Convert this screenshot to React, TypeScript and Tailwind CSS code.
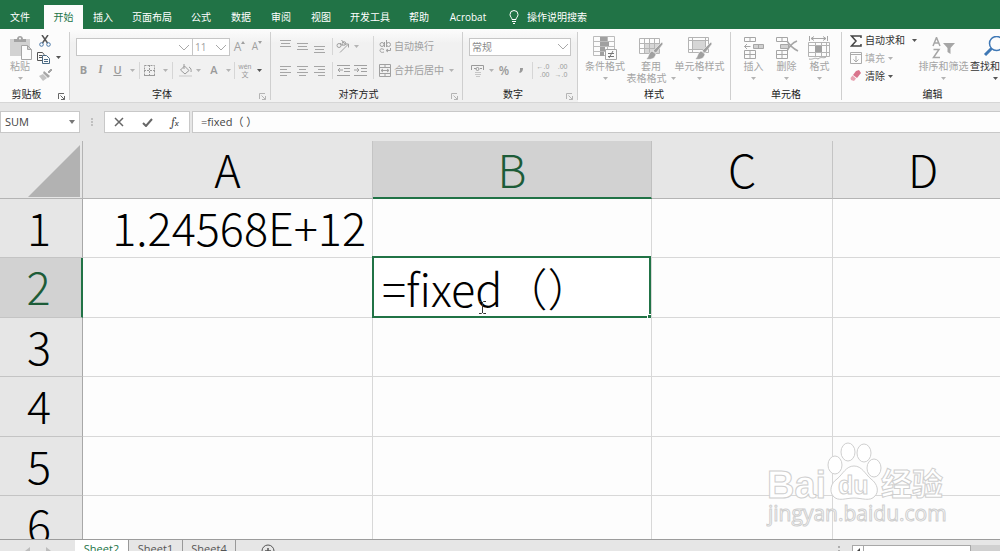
import { useState } from 'react'
import type { ReactNode } from 'react'
import { clsx } from 'clsx'

const TABS = ['文件', '开始', '插入', '页面布局', '公式', '数据', '审阅', '视图', '开发工具', '帮助', 'Acrobat']

const COLUMNS = ['A', 'B', 'C', 'D']

const ROWS = [
  { id: 1, height: 'h-[59px]' },
  { id: 2, height: 'h-[60px]' },
  { id: 3, height: 'h-[59px]' },
  { id: 4, height: 'h-[60px]' },
  { id: 5, height: 'h-[59px]' },
  { id: 6, height: 'h-[60px]' },
]

type IconProps = { w: number; h: number; className?: string; children: ReactNode }

function Icon({ w, h, className, children }: IconProps) {
  return (
    <svg
      width={w}
      height={h}
      viewBox={`0 0 ${w} ${h}`}
      fill="none"
      stroke="currentColor"
      className={clsx('shrink-0', className)}
      aria-hidden="true"
    >
      {children}
    </svg>
  )
}

function Caret({ dark = false }: { dark?: boolean }) {
  return (
    <Icon w={5} h={3} className={dark ? 'text-[#555555]' : 'text-[#b4b4b4]'}>
      <path d="M0 0h5L2.5 3z" fill="currentColor" stroke="none" />
    </Icon>
  )
}

function Chevron() {
  return (
    <Icon w={12} h={7} className="text-[#a8a8a8]">
      <path d="M1 1l5 5 5-5" />
    </Icon>
  )
}

type ToolProps = { label: string; className?: string; children: ReactNode }

function Tool({ label, className = 'w-[17px]', children }: ToolProps) {
  return (
    <button
      type="button"
      aria-label={label}
      className={clsx('flex h-[17px] shrink-0 items-center justify-center', className)}
    >
      {children}
    </button>
  )
}

function Rule() {
  return <span className="h-[17px] w-px shrink-0 bg-[#d6d6d6]" />
}

function Launcher({ label, dark = false }: { label: string; dark?: boolean }) {
  return (
    <button
      type="button"
      aria-label={label}
      className={clsx('absolute right-1 bottom-0', dark ? 'text-[#666666]' : 'text-[#b4b4b4]')}
    >
      <Icon w={7} h={7}>
        <path d="M.5 6V.5H6M2.5 2.5l4 4M6.5 3v3.5H3" />
      </Icon>
    </button>
  )
}

type GroupProps = {
  label: string
  className: string
  launcher?: boolean
  darkLauncher?: boolean
  shaded?: boolean
  children: ReactNode
}

function Group({ label, className, launcher, darkLauncher, shaded, children }: GroupProps) {
  return (
    <section
      aria-label={label}
      className={clsx(
        'shrink-0 pt-[3px] pb-[2px]',
        shaded && 'bg-linear-to-b from-[#fcfcfc] to-[#f1f1f1] to-20%',
        className
      )}
    >
      <div className="relative flex h-full flex-col border-r border-[#cfcfcf]">
        <div className="flex-1">{children}</div>
        <h2 className="text-center text-[10px] leading-[12px] text-[#222222]">{label}</h2>
        {launcher && <Launcher label={`${label}设置`} dark={darkLauncher} />}
      </div>
    </section>
  )
}

type BigToolProps = { icon: ReactNode; lines: string[]; className: string; dark?: boolean }

function BigTool({ icon, lines, className, dark = false }: BigToolProps) {
  return (
    <button
      type="button"
      className={clsx(
        'flex shrink-0 flex-col items-center pt-[3px] text-[10px] leading-[12px] whitespace-nowrap',
        dark ? 'text-[#333333]' : 'text-[#a4a4a4]',
        className
      )}
    >
      <span className="flex h-[25px] items-center text-[#a6a6a6]">{icon}</span>
      <span>{lines[0]}</span>
      {lines[1] ? (
        <span className="flex items-center gap-1">
          {lines[1]}
          <Caret />
        </span>
      ) : (
        <span className="flex h-[12px] items-center">
          <Caret dark={dark} />
        </span>
      )}
    </button>
  )
}

function AlignIcon({ rows }: { rows: number[][] }) {
  return (
    <Icon w={11} h={13} className="text-[#a6a6a6]">
      {rows.map(([y, x, width]) => (
        <path key={y} d={`M${x} ${y + 0.5}h${width}`} />
      ))}
    </Icon>
  )
}

function tabWidth(tab: string) {
  if (tab === '文件') return 'w-11 pr-1'
  if (tab === '开始') return 'w-[39px]'
  return tab.length > 2 ? 'w-[58px]' : 'w-10'
}

function TabStrip() {
  const [active, setActive] = useState('开始')
  return (
    <nav className="flex h-[29px] shrink-0 items-end overflow-hidden bg-[#217346] text-[10px] text-white">
      {TABS.map((tab) => (
        <button
          key={tab}
          type="button"
          onClick={() => setActive(tab)}
          className={clsx(
            'h-6 shrink-0 whitespace-nowrap',
            tabWidth(tab),
            tab === active && 'bg-[#fcfcfc] text-[#217346]'
          )}
        >
          {tab}
        </button>
      ))}
      <label className="ml-3 flex h-6 items-center gap-2">
        <Icon w={10} h={14}>
          <path d="M3 9.5C3 7.5 1 7 1 4.5a4 4 0 018 0C9 7 7 7.5 7 9.5zM3 11.5h4M4 13.5h2" />
        </Icon>
        <input
          type="text"
          placeholder="操作说明搜索"
          className="w-40 bg-transparent text-[10px] outline-none placeholder:text-white"
        />
      </label>
    </nav>
  )
}

function ClipboardGroup() {
  return (
    <Group label="剪贴板" className="w-[70px] [&_h2]:pr-4" launcher darkLauncher>
      <div className="flex pl-[3px]">
        <BigTool
          className="w-[34px]"
          lines={['粘贴']}
          icon={
            <Icon w={23} h={25}>
              <path d="M1 4h20v17H1z" fill="#d2d2d2" stroke="none" />
              <path d="M5 7V4h3c0-4 6-4 6 0h3v3z" fill="#a3a3a3" stroke="none" />
              <circle cx="11" cy="3.5" r="1" fill="#fcfcfc" stroke="none" />
              <path d="M12.5 10.5h6l4 4v10h-10zM18.5 10.5v4h4" fill="#fcfcfc" />
            </Icon>
          }
        />
        <div className="flex flex-col">
          <Tool label="剪切" className="w-4 text-[#555555]">
            <Icon w={12} h={12}>
              <path d="M3 0l5.5 8M9 0L3.5 8" strokeWidth="1.5" />
              <circle cx="2.5" cy="9.5" r="1.8" stroke="#4a78a8" />
              <circle cx="9.5" cy="9.5" r="1.8" stroke="#4a78a8" />
            </Icon>
          </Tool>
          <Tool label="复制" className="w-6 gap-1.5 text-[#555555]">
            <Icon w={13} h={12}>
              <path d="M.5.5h5l1.5 2v6H.5zM2 3.5h3M2 5.5h3" fill="#fcfcfc" />
              <path d="M5.5 3.5h4l3 3v5h-7zM7 7.5h4M7 9.5h4" fill="#fcfcfc" stroke="#4a6a84" />
            </Icon>
            <Caret dark />
          </Tool>
          <Tool label="格式刷" className="w-4 text-[#a6a6a6]">
            <Icon w={13} h={12}>
              <path d="M9 3l3-3 1 1-3 3z" fill="currentColor" />
              <path d="M5 2l6 5-2 2-5-5z" fill="currentColor" stroke="none" />
              <path d="M4 5l4 4-4 3-4-5z" fill="#c4c4c4" stroke="none" />
            </Icon>
          </Tool>
        </div>
      </div>
    </Group>
  )
}

function FontGroup() {
  return (
    <Group label="字体" className="w-[201px] [&_h2]:pr-4" launcher shaded>
      <div className="flex pt-[6px] pl-[6px] text-[#a0a0a0]">
        <div className="flex h-[18px] w-[117px] items-center border border-[#c6c6c6] bg-white pr-0.5">
          <input type="text" aria-label="字体名称" className="w-full min-w-0 bg-transparent text-[10px] outline-none" />
          <Chevron />
        </div>
        <div className="flex h-[18px] w-[37px] items-center border border-l-0 border-[#c6c6c6] bg-white pr-0.5">
          <input
            type="text"
            aria-label="字号"
            defaultValue="11"
            className="w-full min-w-0 bg-transparent pl-0.5 text-[10px] outline-none"
          />
          <Chevron />
        </div>
        <Tool label="增大字号" className="w-[19px] text-[12px]">
          A
          <Icon w={4} h={11}>
            <path d="M0 3l2-3 2 3z" fill="currentColor" stroke="none" />
          </Icon>
        </Tool>
        <Tool label="减小字号" className="w-[16px] text-[10px]">
          A
          <Icon w={4} h={11}>
            <path d="M0 0l2 3 2-3z" fill="currentColor" stroke="none" />
          </Icon>
        </Tool>
      </div>
      <div className="flex pt-[6px] pl-[5px] text-[11px] text-[#9a9a9a]">
        <Tool label="加粗" className="w-[17px] font-bold">
          B
        </Tool>
        <Tool label="倾斜" className="w-[17px] font-serif font-bold italic">
          I
        </Tool>
        <Tool label="下划线" className="w-[30px] gap-2 font-semibold">
          <span className="underline">U</span>
          <Caret />
        </Tool>
        <Rule />
        <Tool label="边框" className="w-[32px] gap-2">
          <Icon w={11} h={11}>
            <path d="M.5.5h10v10H.5zM5.5 0v11M0 5.5h11" strokeDasharray="2 1" />
            <path d="M0 10.5h11" />
          </Icon>
          <Caret />
        </Tool>
        <Rule />
        <Tool label="填充颜色" className="w-[34px] gap-1">
          <Icon w={13} h={13}>
            <path d="M1.5 6l4-4 4.5 4.5L6 10zM5 0v5M10 3c2 1 2.5 3 2 5" />
            <path d="M0 12h13" stroke="#dddddd" strokeWidth="2" />
          </Icon>
          <Caret />
        </Tool>
        <Tool label="字体颜色" className="w-[27px] gap-2 font-semibold">
          A
          <Caret />
        </Tool>
        <Rule />
        <Tool label="拼音指南" className="w-[31px] gap-1.5">
          <span className="flex flex-col items-center font-['Liberation_Sans','Noto_Sans_CJK_SC',sans-serif] text-[7px] leading-[8px]">
            <span>wén</span>
            <span>文</span>
          </span>
          <Caret dark />
        </Tool>
      </div>
    </Group>
  )
}

function AlignmentGroup() {
  return (
    <Group label="对齐方式" className="w-[192px] [&_h2]:pr-4" launcher shaded>
      <div className="flex pl-[6px] text-[10px] whitespace-nowrap text-[#a0a0a0]">
        <div className="flex w-[55px] flex-col gap-[7px] pt-[6px]">
          <div className="flex">
            <Tool label="顶端对齐">
              <AlignIcon rows={[[0, 0, 11], [3, 1, 9], [6, 0, 11]]} />
            </Tool>
            <Tool label="垂直居中">
              <AlignIcon rows={[[3, 0, 11], [6, 1, 9], [9, 0, 11]]} />
            </Tool>
            <Tool label="底端对齐">
              <AlignIcon rows={[[6, 0, 11], [9, 1, 9], [12, 0, 11]]} />
            </Tool>
          </div>
          <div className="flex">
            <Tool label="左对齐">
              <AlignIcon rows={[[2, 0, 11], [5, 0, 7], [8, 0, 11], [11, 0, 7]]} />
            </Tool>
            <Tool label="居中">
              <AlignIcon rows={[[2, 0, 11], [5, 2, 7], [8, 0, 11], [11, 2, 7]]} />
            </Tool>
            <Tool label="右对齐">
              <AlignIcon rows={[[2, 0, 11], [5, 4, 7], [8, 0, 11], [11, 4, 7]]} />
            </Tool>
          </div>
        </div>
        <div className="flex w-[41px] flex-col gap-[7px] pt-[6px]">
          <div className="flex">
            <Rule />
            <Tool label="方向" className="w-[28px] gap-1">
              <Icon w={14} h={13}>
                <circle cx="3" cy="5.5" r="2" />
                <path d="M4 3l2.5 3M5.5 0l4 5" />
                <circle cx="8" cy="3.5" r="1.8" />
                <path d="M4 12.5l8-8M9 4h3.5v3.5" />
              </Icon>
              <Caret />
            </Tool>
          </div>
          <div className="flex">
            <Rule />
            <Tool label="减少缩进量" className="w-[21px]">
              <Icon w={13} h={11}>
                <path d="M0 .5h13M7 3.5h6M7 6.5h6M0 10.5h13M1 5h5M3 3L1 5l2 2" />
              </Icon>
            </Tool>
            <Tool label="增加缩进量" className="w-[13px]">
              <Icon w={13} h={11}>
                <path d="M0 .5h13M7 3.5h6M7 6.5h6M0 10.5h13M0 5h5M3 3l2 2-2 2" />
              </Icon>
            </Tool>
          </div>
        </div>
        <div className="mt-1 flex flex-col gap-[7px] border-l border-[#d6d6d6] pt-[2px] pl-[5px]">
          <button type="button" className="flex h-[17px] items-center gap-[3px]">
            <Icon w={12} h={14}>
              <circle cx="3" cy="4.5" r="2" />
              <path d="M5.5 2v5M7.5 0v7M5 9.5C2 8 1 9 1 10.5S3 13 5 12M11.5 8v2.5h-4M9 9l-2 1.5L9 12" />
              <circle cx="9.5" cy="4.5" r="2" />
            </Icon>
            自动换行
          </button>
          <button type="button" className="flex h-[17px] items-center gap-[3px]">
            <Icon w={12} h={13}>
              <path d="M.5.5h11v12H.5zM0 3.5h12M0 9.5h12M6 0v3.5M6 9.5V13M2 6.5h8M4 5L2 6.5 4 8M8 5l2 1.5L8 8" />
            </Icon>
            合并后居中
            <span className="ml-0.5">
              <Caret />
            </span>
          </button>
        </div>
      </div>
    </Group>
  )
}

function NumberGroup() {
  return (
    <Group label="数字" className="w-[115px] [&_h2]:pr-[14px]" launcher shaded>
      <div className="px-[6px] pt-[6px]">
        <div className="relative">
          <select
            aria-label="数字格式"
            defaultValue="常规"
            className="block h-[18px] w-full appearance-none border border-[#c6c6c6] bg-white pl-0.5 text-[10px] text-[#8c8c8c]"
          >
            <option>常规</option>
            <option>数值</option>
          </select>
          <span className="pointer-events-none absolute top-[5px] right-0.5">
            <Chevron />
          </span>
        </div>
      </div>
      <div className="flex pt-[6px] pl-[7px] text-[#9a9a9a]">
        <Tool label="会计数字格式" className="w-6 gap-1">
          <Icon w={14} h={12}>
            <path d="M.5 5V.5h12V5M3 3.5h2M9 3.5h2" />
            <circle cx="6.5" cy="4" r="1.5" />
            <path d="M4 7.5h6M4 9.5h6M5 11.5h4" stroke="#c6c6c6" />
          </Icon>
          <Caret />
        </Tool>
        <Tool label="百分比样式" className="w-[20px] text-[12px] font-semibold">
          %
        </Tool>
        <Tool label="千位分隔样式" className="w-[18px] pr-1">
          <Icon w={4} h={5}>
            <path d="M1 0h3c0 3-1 4-3 5l-1-1c1-1 1-1 1-2z" fill="currentColor" stroke="none" />
          </Icon>
        </Tool>
        <Rule />
        <Tool label="增加小数位数" className="w-[20px]">
          <span className="flex flex-col items-end font-['Liberation_Sans',sans-serif] text-[7px] leading-[8px]">
            <span>←.0</span>
            <span>.00</span>
          </span>
        </Tool>
        <Tool label="减少小数位数" className="w-[16px]">
          <span className="flex flex-col items-end font-['Liberation_Sans',sans-serif] text-[7px] leading-[8px]">
            <span>.00</span>
            <span>→.0</span>
          </span>
        </Tool>
      </div>
    </Group>
  )
}

function BrushMark() {
  return (
    <>
      <path d="M23 6l1 2-7 9-3-2z" fill="#a0a0a0" stroke="#fcfcfc" strokeWidth=".5" />
      <path d="M13 15l4 3c-1 5-6 6-10 5 3-1 2-6 6-8z" fill="#a0a0a0" stroke="#fcfcfc" strokeWidth=".5" />
    </>
  )
}

function StylesGroup() {
  return (
    <Group label="样式" className="w-[153px]">
      <div className="flex pl-[3px]">
        <BigTool
          className="w-[48px]"
          lines={['条件格式']}
          icon={
            <Icon w={24} h={24}>
              <path d="M.5.5h21v19H.5zM.5 5.5h21M.5 10.5h21M.5 15.5h21M7.5.5v19M14.5.5v19" stroke="#bcbcbc" />
              <path d="M7 1h7v4H7zM7 6h9v4H7zM7 11h5v4H7zM7 16h4v4H7z" fill="#a0a0a0" stroke="none" />
              <path d="M12.5 13.5h11v10h-11z" fill="#fcfcfc" />
              <path d="M15 17.5h6M15 20.5h6M20 15l-4 7" stroke="#777777" />
            </Icon>
          }
        />
        <BigTool
          className="w-[44px]"
          lines={['套用', '表格格式']}
          icon={
            <Icon w={24} h={24}>
              <path d="M6 7h15v10H6z" fill="#d6d6d6" stroke="none" />
              <path d="M.5 2.5h20v15H.5zM.5 7.5h20M.5 12.5h20M5.5 2.5v15M10.5 2.5v15M15.5 2.5v15" stroke="#b4b4b4" />
              <BrushMark />
            </Icon>
          }
        />
        <BigTool
          className="w-[53px]"
          lines={['单元格样式']}
          icon={
            <Icon w={24} h={24}>
              <path d="M4 5h13v8H4z" fill="#d6d6d6" stroke="none" />
              <path d="M.5 1.5h20v15H.5zM.5 4.5h20M.5 13.5h20M4.5 1.5v15M17.5 1.5v15" stroke="#b4b4b4" />
              <BrushMark />
            </Icon>
          }
        />
      </div>
    </Group>
  )
}

function CellsGroup() {
  return (
    <Group label="单元格" className="w-[111px]">
      <div className="flex pl-[6px]">
        <BigTool
          className="w-[33px]"
          lines={['插入']}
          icon={
            <Icon w={22} h={24}>
              <path d="M1.5 1.5h11v4h-11zM7 1.5v4M1.5 14.5h11v8h-11zM1.5 18.5h11M7 14.5v8" />
              <path d="M10.5 8.5h10v4h-10zM15.5 8.5v4" fill="#d0d0d0" />
              <path d="M1.5 10.5h6M4 8l-2.5 2.5L4 13" />
            </Icon>
          }
        />
        <BigTool
          className="w-[33px]"
          lines={['删除']}
          icon={
            <Icon w={24} h={24}>
              <path d="M1.5 1.5h11v4h-11zM7 1.5v4M1.5 14.5h11v8h-11zM1.5 18.5h11M7 14.5v8" />
              <path d="M5.5 8.5h8v4h-8z" fill="#d0d0d0" />
              <path d="M12 5c3 5 7 8 11 10M22 5c-5 2-8 6-10 10" strokeWidth="1.5" />
            </Icon>
          }
        />
        <BigTool
          className="w-[33px]"
          lines={['格式']}
          icon={
            <Icon w={23} h={24}>
              <path d="M1.5 0v5M19.5 0v5M3 2.5h15M6 .5l-3 2 3 2M15 .5l3 2-3 2" />
              <path d="M.5 6.5h21v14H.5zM.5 9.5h21M.5 16.5h21M7.5 6.5v14M13.5 6.5v14M18.5 6.5v14" stroke="#b4b4b4" />
              <path d="M7 10h7v6H7z" fill="#a0a0a0" stroke="none" />
              <path d="M1 23c4 1 5-2 9 0 4-3 5 0 8-2" />
            </Icon>
          }
        />
      </div>
    </Group>
  )
}

function EditingGroup() {
  return (
    <Group label="编辑" className="w-[182px]">
      <div className="flex pl-2">
        <div className="flex w-[68px] flex-col text-[10px] whitespace-nowrap text-[#333333]">
          <button type="button" className="flex h-[17px] items-center gap-[3px]">
            <Icon w={12} h={12} className="text-[#444444]">
              <path d="M11 3V1H1.5L6 6l-4.5 5H11V9" strokeWidth="1.5" />
            </Icon>
            自动求和
            <span className="ml-1">
              <Caret dark />
            </span>
          </button>
          <button type="button" className="flex h-[18px] items-center gap-[3px] text-[#ababab]">
            <Icon w={12} h={12}>
              <path d="M.5.5h11v11H.5zM0 2.5h12M6 4v6M3.5 7.5L6 10l2.5-2.5" />
            </Icon>
            填充
            <Caret />
          </button>
          <button type="button" className="flex h-[18px] items-center gap-[3px]">
            <Icon w={12} h={12}>
              <path d="M6 1l3-1 2 3-4 5-4-3z" fill="#d9748c" stroke="none" />
              <path d="M2.5 5.5L6 8.5 4 11l-3-1-.5-2z" fill="#e7a3b2" stroke="none" />
            </Icon>
            清除
            <Caret dark />
          </button>
        </div>
        <BigTool
          className="w-[51px]"
          lines={['排序和筛选']}
          icon={
            <Icon w={24} h={22}>
              <path d="M1 9L4.5.5 8 9M2.5 6h4M1.5 12.5H7l-5.5 8H8" strokeWidth="1.5" />
              <path d="M11 6h12l-4.5 5v6l-3-2v-4z" fill="currentColor" stroke="none" />
            </Icon>
          }
        />
        <BigTool
          dark
          className="w-[52px]"
          lines={['查找和选择']}
          icon={
            <Icon w={24} h={24} className="text-[#3f78b5]">
              <circle cx="13.5" cy="7.5" r="7" strokeWidth="1.5" />
              <path d="M8.5 12.5L2 19" strokeWidth="3" />
            </Icon>
          }
        />
      </div>
    </Group>
  )
}

function FormulaBar() {
  return (
    <div className="flex h-[22px] shrink-0 text-[11px] text-[#444444]">
      <div className="flex w-[80px] items-center border border-[#c8c8c8] bg-white pr-1">
        <input
          type="text"
          aria-label="名称框"
          defaultValue="SUM"
          className="w-full min-w-0 bg-transparent pl-1 text-[11px] outline-none"
        />
        <Icon w={6} h={4} className="text-[#777777]">
          <path d="M0 0h6L3 4z" fill="currentColor" stroke="none" />
        </Icon>
      </div>
      <div className="flex w-6 items-center justify-center text-[#999999]">
        <Icon w={2} h={10}>
          <path d="M1 1v2M1 4v2M1 7v2" />
        </Icon>
      </div>
      <div className="flex w-[86px] items-center justify-around border border-[#c8c8c8] bg-white">
        <Tool label="取消">
          <Icon w={10} h={10} className="text-[#666666]">
            <path d="M1 1l8 8M9 1L1 9" strokeWidth="1.5" />
          </Icon>
        </Tool>
        <Tool label="输入">
          <Icon w={11} h={9} className="text-[#666666]">
            <path d="M1 5l3 3 6-7" strokeWidth="2" />
          </Icon>
        </Tool>
        <Tool label="插入函数">
          <span className="font-serif text-[12px] italic">
            f<span className="text-[9px]">x</span>
          </span>
        </Tool>
      </div>
      <input
        type="text"
        aria-label="编辑栏"
        defaultValue="=fixed（ ）"
        className="ml-[2px] min-w-0 flex-1 border border-r-0 border-[#c8c8c8] bg-[#fdfdfd] pl-2 text-[11px] outline-none"
      />
    </div>
  )
}

function CellContent({ row, col }: { row: number; col: string }) {
  if (row === 1 && col === 'A') {
    return <div className="pr-[6px] text-right whitespace-nowrap">1.24568E+12</div>
  }
  if (row === 2 && col === 'B') {
    return (
      <div className="relative -mt-0.5 -ml-px h-[62px] border-2 border-[#217346] bg-white">
        <input
          type="text"
          aria-label="B2"
          defaultValue="=fixed（）"
          className="block h-[58px] w-full bg-transparent pl-2 outline-none"
        />
        <span className="absolute -right-0.5 -bottom-0.5 size-1 border-t border-l border-white bg-[#217346]" />
        <Icon w={7} h={13} className="absolute top-[43px] left-[105px] text-[#333333]">
          <path d="M0 .5h2.5l1 1 1-1H7M3.5 1v11M0 12.5h2.5l1-1 1 1H7" />
        </Icon>
      </div>
    )
  }
  return null
}

function Grid() {
  return (
    <table className="w-full table-fixed border-separate border-spacing-0 text-[45px] leading-[56px] font-light text-black">
      <colgroup>
        <col className="w-[83px]" />
        <col className="w-[290px]" />
        <col className="w-[279px]" />
        <col className="w-[181px]" />
        <col />
      </colgroup>
      <thead>
        <tr className="h-[58px]">
          <th className="border-r border-b border-[#b4b4b4] bg-[#e6e6e6] p-0">
            <button type="button" aria-label="全选" className="flex h-[54px] w-full items-end justify-end pr-[2px]">
              <Icon w={52} h={52}>
                <path d="M52 0v52H0z" fill="#b2b2b2" stroke="none" />
              </Icon>
            </button>
          </th>
          {COLUMNS.map((col) => (
            <th
              key={col}
              scope="col"
              className={clsx(
                'p-0 text-center align-top font-light',
                col === 'B'
                  ? 'border-r border-b-2 border-r-[#c0c0c0] border-b-[#217346] bg-[#d2d2d2] text-[#1d5c38]'
                  : 'border-b border-r-[#c4c4c4] border-b-[#b4b4b4] bg-[#e6e6e6]',
                col !== 'D' && 'border-r'
              )}
            >
              <div className={clsx('h-14', col === 'D' && 'w-[180px]')}>{col}</div>
            </th>
          ))}
        </tr>
      </thead>
      <tbody>
        {ROWS.map(({ id, height }) => (
          <tr key={id} className={height}>
            <th
              scope="row"
              className={clsx(
                'border-b border-b-[#c4c4c4] p-0 pr-1 text-center align-top font-light',
                id === 2
                  ? 'border-r-2 border-r-[#217346] bg-[#d2d2d2] text-[#1d5c38]'
                  : 'border-r border-r-[#a8a8a8] bg-[#e6e6e6]'
              )}
            >
              <div className="h-[58px]">{id}</div>
            </th>
            {COLUMNS.map((col) => (
              <td
                key={col}
                className={clsx('border-b border-[#d8d8d8] p-0 align-top', col !== 'D' && 'border-r')}
              >
                <div className="h-[58px]">
                  <CellContent row={id} col={col} />
                </div>
              </td>
            ))}
          </tr>
        ))}
      </tbody>
    </table>
  )
}

function Watermark() {
  return (
    <svg
      width="184"
      height="90"
      viewBox="0 0 184 90"
      className="pointer-events-none absolute right-[50px] bottom-[8px]"
      fill="#ffffff"
      stroke="#cfcfcf"
      aria-hidden="true"
    >
      <text x="1" y="57" fontSize="38" fontWeight="700" fontFamily="'Liberation Sans', sans-serif">
        Bai
      </text>
      <ellipse cx="69" cy="24" rx="7" ry="9" />
      <ellipse cx="82" cy="11" rx="7" ry="9" />
      <ellipse cx="98" cy="12" rx="7" ry="9" />
      <ellipse cx="108" cy="27" rx="7" ry="9" />
      <path d="M88 25c8 0 11 8 17 13 7 5 8 13 4 17-5 6-13 2-21 2s-16 4-21-2c-4-5-2-13 4-17 6-5 9-13 17-13z" />
      <text x="72" y="53" fontSize="25" fontWeight="700" fontFamily="'Liberation Sans', sans-serif">
        du
      </text>
      <text x="115" y="54" fontSize="31" fontWeight="700" fontFamily="'Noto Sans CJK SC', sans-serif">
        经验
      </text>
      <text x="2" y="80" fontSize="21" fontFamily="'Open Sans', sans-serif">
        jingyan.baidu.com
      </text>
    </svg>
  )
}

function SheetTabs() {
  return (
    <footer className="flex h-3 shrink-0 items-start overflow-hidden border-t border-[#9c9c9c] bg-[#e6e6e6] text-[11px] leading-[15px] text-[#555555]">
      <div className="flex w-[75px] justify-center gap-4 pt-[7px] text-[#bcbcbc]">
        <Icon w={5} h={8}>
          <path d="M5 0v8L0 4z" fill="currentColor" stroke="none" />
        </Icon>
        <Icon w={5} h={8}>
          <path d="M0 0v8l5-4z" fill="currentColor" stroke="none" />
        </Icon>
      </div>
      <button type="button" className="h-4 w-[54px] border-r border-[#999999] bg-white text-[#217346]">
        Sheet2
      </button>
      <button type="button" className="h-4 w-[54px] border-r border-[#999999]">
        Sheet1
      </button>
      <button type="button" className="h-4 w-[53px] border-r border-[#999999]">
        Sheet4
      </button>
      <button type="button" aria-label="新工作表" className="ml-[25px] pt-[4px]">
        <Icon w={14} h={14}>
          <circle cx="7" cy="7" r="6" />
          <path d="M4 7h6M7 4v6" strokeWidth="1.5" />
        </Icon>
      </button>
      <div className="ml-auto flex w-[162px] text-[#777777]">
        <Icon w={2} h={11} className="mt-1">
          <path d="M1 2v2M1 6v2" />
        </Icon>
        <button
          type="button"
          aria-label="向左滚动"
          className="mt-[5px] ml-3 flex h-4 w-3 justify-center border border-[#a8a8a8] bg-white pt-0.5"
        >
          <Icon w={4} h={8}>
            <path d="M4 0v8L0 4z" fill="#444444" stroke="none" />
          </Icon>
        </button>
        <div className="mt-[5px] h-4 w-[107px] border border-l-0 border-[#a8a8a8] bg-white" />
        <div className="mt-[5px] h-4 flex-1 bg-[#d0d0d0]" />
      </div>
    </footer>
  )
}

export default function App() {
  return (
    <div className="flex h-screen flex-col overflow-hidden bg-[#e6e6e6] font-['Open_Sans','Noto_Sans_CJK_SC',sans-serif]">
      <TabStrip />
      <div className="flex h-[73px] shrink-0 overflow-hidden bg-[#fcfcfc]">
        <ClipboardGroup />
        <FontGroup />
        <AlignmentGroup />
        <NumberGroup />
        <StylesGroup />
        <CellsGroup />
        <EditingGroup />
      </div>
      <div className="h-[9px] shrink-0 border-t border-[#d6d6d6]" />
      <FormulaBar />
      <main className="relative mt-[8px] min-h-0 flex-1 overflow-hidden bg-[#fdfdfd] font-['Noto_Sans_CJK_SC',sans-serif]">
        <Grid />
        <Watermark />
      </main>
      <SheetTabs />
    </div>
  )
}
